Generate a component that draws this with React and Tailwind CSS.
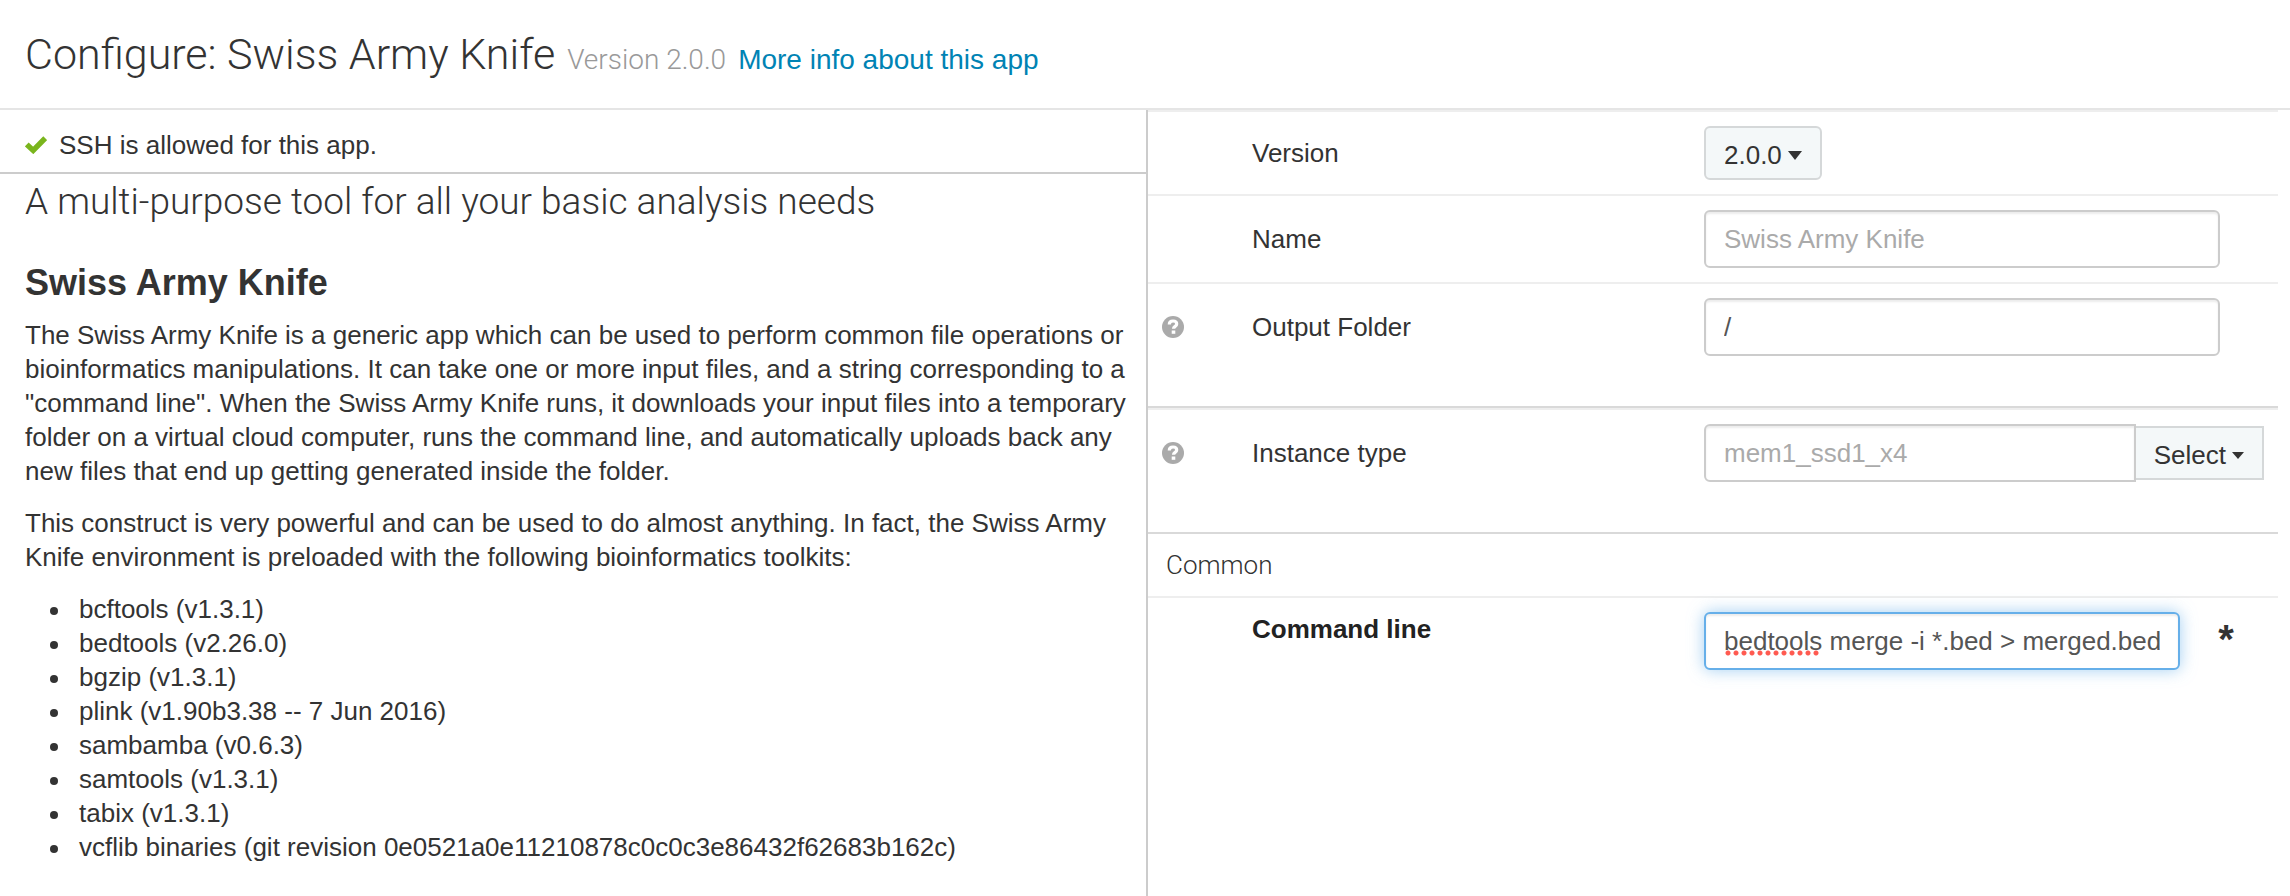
import React from "react";

const field =
  "h-[58px] border-2 border-[#ccc] bg-white px-[18px] text-[26px] leading-[34px] text-[#555] shadow-[inset_0_2px_2px_rgba(0,0,0,0.075)] outline-none placeholder:text-[#aaa] placeholder:opacity-100";

function HelpIcon() {
  return (
    <svg viewBox="0 0 22 22" className="size-[22px]" aria-hidden="true">
      <circle cx="11" cy="11" r="11" fill="#aaa" />
      <path d="M7.300 8.400C7.300 6 8.800 5 11 5c2.300 0 3.700 1.100 3.700 2.900 0 2.500-3.200 2.400-3.200 4.900" fill="none" stroke="#fff" strokeWidth="3.200" />
      <rect x="9.700" y="14.500" width="3.600" height="3.300" fill="#fff" />
    </svg>
  );
}

function Row({ label, htmlFor, help, className = "", labelClass = "h-[58px]", children }) {
  return (
    <div className={`grid grid-cols-[104px_40%_1fr] border-t-2 border-[#eee] pt-[14px] ${className}`}>
      <div className={`flex items-center pl-[14px] ${labelClass}`}>
        {help && (
          <button type="button" aria-label={`Help: ${label}`}>
            <HelpIcon />
          </button>
        )}
      </div>
      <label htmlFor={htmlFor} className={`flex items-center ${labelClass}`}>
        {label}
      </label>
      <div>{children}</div>
    </div>
  );
}

const tools = [
  "bcftools (v1.3.1)",
  "bedtools (v2.26.0)",
  "bgzip (v1.3.1)",
  "plink (v1.90b3.38 -- 7 Jun 2016)",
  "sambamba (v0.6.3)",
  "samtools (v1.3.1)",
  "tabix (v1.3.1)",
  "vcflib binaries (git revision 0e0521a0e11210878c0c0c3e86432f62683b162c)",
];

export default function App() {
  return (
    <div className="flex min-h-screen flex-col bg-white font-['Liberation_Sans',Arial,sans-serif] text-[26px] leading-[34px] text-[#333]">
      <header className="flex items-baseline border-b-2 border-[#e5e5e5] px-[25px] py-6">
        <h1 className="font-['Roboto',sans-serif] text-[43px] leading-[60px] font-light">Configure: Swiss Army Knife</h1>
        <span className="ml-3 font-['Roboto',sans-serif] text-[28px] font-light text-[#999]">Version 2.0.0</span>
        <a href="#info" className="ml-3 text-[28px] text-[#0083b4]">More info about this app</a>
      </header>
      <div className="flex flex-1">
        <main className="w-[calc(50%+1px)]">
          <div className="flex items-center gap-3 border-b-2 border-[#ccc] px-[25px] pt-[18px] pb-[10px]">
            <svg viewBox="0 0 22 18" className="w-[22px]" aria-hidden="true">
              <path d="M1.800 8.400 8.200 14.400 20.200 2.200" fill="none" stroke="#7ab51d" strokeWidth="5.400" />
            </svg>
            <span>SSH is allowed for this app.</span>
          </div>
          <div className="pr-3 pl-[25px]">
            <h2 className="pt-[2px] font-['Roboto',sans-serif] text-[37px] leading-[52px] font-light">A multi-purpose tool for all your basic analysis needs</h2>
            <h3 className="mt-[30px] text-[36px] leading-[50px] font-bold">Swiss Army Knife</h3>
            <p className="mt-[10px]">
              The Swiss Army Knife is a generic app which can be used to perform common file operations or bioinformatics manipulations. It can take one or more input files, and a string corresponding to a "command line". When the Swiss Army Knife runs, it downloads your input files into a temporary folder on a virtual cloud computer, runs the command line, and automatically uploads back any new files that end up getting generated inside the folder.
            </p>
            <p className="mt-[18px]">
              This construct is very powerful and can be used to do almost anything. In fact, the Swiss Army Knife environment is preloaded with the following bioinformatics toolkits:
            </p>
            <ul className="mt-[18px] pl-[25px]">
              {tools.map((t) => (
                <li key={t} className="flex before:mt-[15px] before:mr-[21px] before:size-2 before:shrink-0 before:rounded-full before:bg-[#333] before:content-['']">{t}</li>
              ))}
            </ul>
          </div>
        </main>
        <section className="min-w-0 flex-1 border-l-2 border-[#ccc] pr-3">
          <Row label="Version" htmlFor="version" className="pb-[14px]" labelClass="h-[54px]">
            <button id="version" type="button" className="flex h-[54px] items-center gap-[6px] rounded-md border-2 border-[#d5d8d9] bg-[#f4f8f9] px-[18px] pt-1">
              2.0.0
              <svg viewBox="0 0 14 9" className="w-[14px]" aria-hidden="true">
                <path d="M0 0h14L7 9Z" fill="#333" />
              </svg>
            </button>
          </Row>
          <Row label="Name" htmlFor="name" className="pb-[14px]">
            <div className="pr-[58px]">
              <input id="name" placeholder="Swiss Army Knife" className={`${field} w-full rounded-md`} />
            </div>
          </Row>
          <Row label="Output Folder" htmlFor="folder" help className="pb-[50px]">
            <div className="pr-[58px]">
              <input id="folder" defaultValue="/" className={`${field} w-full rounded-md`} />
            </div>
          </Row>
          <div className="border-y-2 border-[#d9d9d9]">
            <Row label="Instance type" htmlFor="instance" help className="pb-[50px]">
              <div className="flex items-center pr-[14px]">
                <input id="instance" placeholder="mem1_ssd1_x4" className={`${field} min-w-0 flex-1 rounded-l-md`} />
                <button type="button" className="flex h-[54px] items-center gap-[6px] border-2 border-l-0 border-[#d5d8d9] bg-[#f4f8f9] px-[18px] pt-1">
                  Select
                  <svg viewBox="0 0 12 7" className="w-[12px]" aria-hidden="true">
                    <path d="M0 0h12L6 7Z" fill="#333" />
                  </svg>
                </button>
              </div>
            </Row>
          </div>
          <h4 className="px-[18px] py-[14px] font-['Roboto',sans-serif] text-[26px] font-light">Common</h4>
          <div className="grid grid-cols-[104px_40%_1fr] border-t-2 border-[#eee] pt-[14px]">
            <label htmlFor="command" className="col-start-2 font-bold text-[#222]">Command line</label>
            <div className="flex items-start">
              <div className="relative flex-1">
                <input
                  id="command"
                  spellCheck={false}
                  defaultValue="bedtools merge -i *.bed > merged.bed"
                  className="h-[58px] w-full rounded-md border-2 border-[#66afe9] bg-white px-[18px] text-[#555] shadow-[inset_0_2px_2px_rgba(0,0,0,0.075),0_0_16px_rgba(102,175,233,0.6)] outline-none"
                />
                <span className="absolute top-[38px] left-5 h-[6px] w-[96px] bg-[radial-gradient(circle,#ff5a50_0_2px,transparent_3px)] bg-[length:8px_6px]" />
              </div>
              <span className="w-[98px] pt-[10px] pr-[6px] text-center text-[40px] leading-[34px] font-bold">*</span>
            </div>
          </div>
        </section>
      </div>
    </div>
  );
}
